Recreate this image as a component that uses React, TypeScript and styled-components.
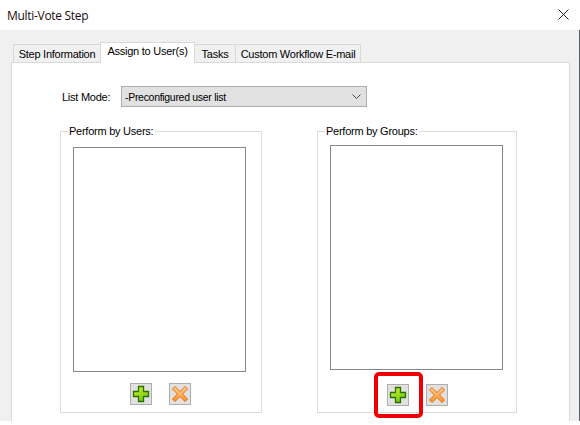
import React from 'react';
import styled, { createGlobalStyle } from 'styled-components';

const GlobalStyle = createGlobalStyle`
    html, body {
        margin: 0;
        padding: 0;
        background: #ffffff;
    }
    body {
        font-family: 'Liberation Sans', Arial, sans-serif;
        font-size: 11px;
        letter-spacing: -0.25px;
        color: #000000;
    }
    * {
        box-sizing: border-box;
    }
`;

const Dialog = styled.div`
    width: 580px;
    height: 421px;
    display: flex;
    flex-direction: column;
`;

const TitleBar = styled.div`
    height: 30px;
    flex: none;
    display: flex;
    align-items: center;
    justify-content: space-between;
    padding: 0 11px 0 7px;
    background: #ffffff;
    font-family: 'Open Sans', 'Noto Sans', sans-serif;
    font-size: 12px;
    letter-spacing: -0.3px;
    color: #1a0a10;
`;

const CloseIcon = styled.svg`
    width: 11px;
    height: 11px;
    margin-bottom: 2px;
    display: block;
`;

const Body = styled.div`
    flex: 1;
    min-height: 0;
    display: flex;
    flex-direction: column;
    padding: 12px 9px 0 11px;
    background: #f0f0f0;
    border-right: 1px solid #5a5f63;
`;

const TabStrip = styled.div`
    display: flex;
    align-items: flex-end;
    height: 21px;
    padding-left: 3px;
    position: relative;
    z-index: 1;
    margin-bottom: -1px;
`;

const Tab = styled.div<{ $active?: boolean; $width: number }>`
    width: ${(p) => p.$width}px;
    height: ${(p) => (p.$active ? 21 : 19)}px;
    display: flex;
    align-items: ${(p) => (p.$active ? 'flex-start' : 'center')};
    justify-content: center;
    padding-top: ${(p) => (p.$active ? 2 : 0)}px;
    background: ${(p) => (p.$active ? '#ffffff' : '#f0f0f0')};
    border: 1px solid #d9d9d9;
    border-bottom: ${(p) => (p.$active ? 'none' : '1px solid #d9d9d9')};
    margin-left: -1px;
    position: relative;
    z-index: ${(p) => (p.$active ? 2 : 0)};
    white-space: nowrap;
`;

const Panel = styled.div`
    flex: 1;
    min-height: 0;
    background: #ffffff;
    border: 1px solid #d9d9d9;
    border-bottom: none;
    padding: 23px 0 0 48px;
`;

const ModeRow = styled.div`
    display: flex;
    align-items: center;
    height: 21px;
    padding-left: 2px;
`;

const ModeLabel = styled.div`
    width: 59px;
`;

const ModeSelect = styled.div`
    width: 246px;
    height: 21px;
    display: flex;
    align-items: center;
    justify-content: space-between;
    padding: 0 4px 0 3px;
    background: #e1e1e1;
    border: 1px solid #adadad;
    font-size: 10.5px;
    letter-spacing: -0.3px;
`;

const Chevron = styled.svg`
    width: 9px;
    height: 6px;
    margin-right: 1px;
    display: block;
`;

const Groups = styled.div`
    display: flex;
    gap: 55px;
    margin-top: 24px;
`;

const Group = styled.div<{ $width: number; $listTop: number }>`
    position: relative;
    width: ${(p) => p.$width}px;
    height: 282px;
    border: 1px solid #dcdcdc;
    padding: ${(p) => p.$listTop}px 0 0 12px;
`;

const GroupLegend = styled.div`
    position: absolute;
    top: -7px;
    left: 7px;
    padding: 0 2px 0 1px;
    background: #ffffff;
    line-height: 13px;
`;

const ListBox = styled.div`
    width: 173px;
    height: 225px;
    background: #ffffff;
    border: 1px solid #828790;
`;

const ButtonRow = styled.div<{ $top: number }>`
    display: flex;
    gap: 17px;
    margin-top: ${(p) => p.$top}px;
    padding-left: 57px;
`;

const ToolButton = styled.div`
    position: relative;
    width: 22px;
    height: 22px;
    display: flex;
    align-items: center;
    justify-content: center;
    background: #e1e1e1;
    border: 1px solid #adadad;
`;

const Highlight = styled.div`
    position: absolute;
    top: -13px;
    left: -14px;
    width: 49px;
    height: 46px;
    border: 4px solid #f00000;
    border-radius: 5px;
`;

const IconSvg = styled.svg`
    width: 18px;
    height: 18px;
    display: block;
`;

const AddIcon = () => (
    <IconSvg viewBox="0 0 18 18">
        <defs>
            <linearGradient id="addFill" x1="0" y1="0" x2="0.6" y2="1">
                <stop offset="0" stopColor="#d6f53a" />
                <stop offset="1" stopColor="#74c80c" />
            </linearGradient>
        </defs>
        <path
            d="M6.5 1.5h5v5h5v5h-5v5h-5v-5h-5v-5h5z"
            fill="url(#addFill)"
            stroke="#2a7000"
            strokeWidth="1.3"
        />
    </IconSvg>
);

const RemoveIcon = () => (
    <IconSvg viewBox="0 0 18 18">
        <defs>
            <linearGradient id="removeFill" x1="0" y1="0" x2="0" y2="1">
                <stop offset="0" stopColor="#ffd09a" />
                <stop offset="1" stopColor="#ff9426" />
            </linearGradient>
        </defs>
        <path
            d="M4 1.5L9 6.5L14 1.5L16.5 4L11.5 9L16.5 14L14 16.5L9 11.5L4 16.5L1.5 14L6.5 9L1.5 4z"
            fill="url(#removeFill)"
            stroke="#e86c08"
            strokeWidth="1"
        />
    </IconSvg>
);

const tabs = [
    { label: 'Step Information', width: 88 },
    { label: 'Assign to User(s)', width: 95, active: true },
    { label: 'Tasks', width: 42 },
    { label: 'Custom Workflow E-mail', width: 126 },
];

const App = () => {
    return (
        <Dialog>
            <GlobalStyle />
            <TitleBar>
                Multi-Vote Step
                <CloseIcon viewBox="0 0 11 11">
                    <path d="M0.5 0.5L10.5 10.5M10.5 0.5L0.5 10.5" stroke="#222222" strokeWidth="1" fill="none" />
                </CloseIcon>
            </TitleBar>
            <Body>
                <TabStrip>
                    {tabs.map((tab) => (
                        <Tab key={tab.label} $active={tab.active} $width={tab.width}>
                            {tab.label}
                        </Tab>
                    ))}
                </TabStrip>
                <Panel>
                    <ModeRow>
                        <ModeLabel>List Mode:</ModeLabel>
                        <ModeSelect>
                            -Preconfigured user list
                            <Chevron viewBox="0 0 9 6">
                                <path d="M0.5 0.5L4.5 4.5L8.5 0.5" stroke="#444444" fill="none" />
                            </Chevron>
                        </ModeSelect>
                    </ModeRow>
                    <Groups>
                        <Group $width={202} $listTop={15}>
                            <GroupLegend>Perform by Users:</GroupLegend>
                            <ListBox />
                            <ButtonRow $top={11}>
                                <ToolButton>
                                    <AddIcon />
                                </ToolButton>
                                <ToolButton>
                                    <RemoveIcon />
                                </ToolButton>
                            </ButtonRow>
                        </Group>
                        <Group $width={200} $listTop={13}>
                            <GroupLegend>Perform by Groups:</GroupLegend>
                            <ListBox />
                            <ButtonRow $top={14}>
                                <ToolButton>
                                    <AddIcon />
                                    <Highlight />
                                </ToolButton>
                                <ToolButton>
                                    <RemoveIcon />
                                </ToolButton>
                            </ButtonRow>
                        </Group>
                    </Groups>
                </Panel>
            </Body>
        </Dialog>
    );
};

export default App;
